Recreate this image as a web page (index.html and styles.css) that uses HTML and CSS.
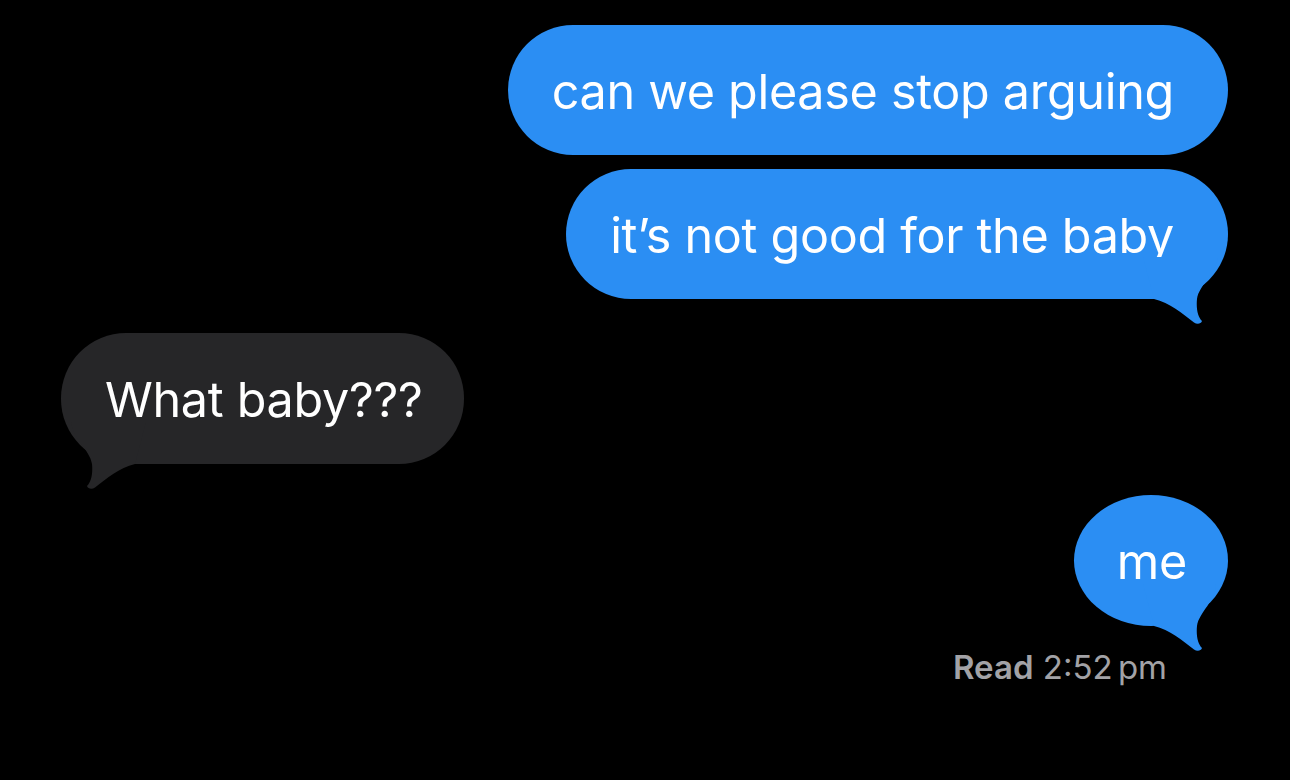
FILE: index.html
```html
<!DOCTYPE html>
<html>
<head>
<meta charset="utf-8">
<link rel="stylesheet" href="styles.css">
</head>
<body>
<div class="thread">
  <div class="msg sent pill first">can we please stop arguing</div>
  <div class="msg sent pill second">it’s not good for the baby
    <svg class="tail tail-right" viewBox="-90 -45 100 70" width="100" height="70"><path d="M -85 -42 L -10 -42 C -12 -25 -29 -14 -31 0 C -32 10 -30 18 -26 22 C -27 25 -31 25.5 -34 23.5 C -46 14 -58 4 -74 0 Z"/></svg>
  </div>
  <div class="msg recv pill">What baby???
    <svg class="tail tail-left" viewBox="-90 -45 100 70" width="100" height="70"><path d="M -85 -42 L -10 -42 C -12 -25 -29 -14 -31 0 C -32 10 -30 18 -26 22 C -27 25 -31 25.5 -34 23.5 C -46 14 -58 4 -74 0 Z"/></svg>
  </div>
  <div class="msg sent oval">me
    <svg class="tail tail-right" viewBox="-90 -45 100 70" width="100" height="70"><path d="M -85 -42 L -12 -42 C -12 -25 -29 -14 -31 0 C -32 10 -30 18 -26 22 C -27 25 -31 25.5 -34 23.5 C -46 14 -58 4 -74 0 Z"/></svg>
  </div>
  <div class="receipt"><b>Read</b> 2:52<span class="thin"> </span>pm</div>
</div>
</body>
</html>
```

FILE: styles.css
```css
html, body {
  margin: 0;
  padding: 0;
  background: #000;
  width: 1290px;
  height: 780px;
  overflow: hidden;
}

.thread {
  display: flex;
  flex-direction: column;
  padding: 25px 62px 0 61px;
  font-family: "Inter", "Liberation Sans", sans-serif;
}

.msg {
  position: relative;
  color: #fff;
  font-size: 48.5px;
  line-height: 60px;
  height: 130px;
  box-sizing: border-box;
  padding-top: 37px;
  white-space: nowrap;
  letter-spacing: -0.3px;
}

.pill {
  border-radius: 65px;
}

.sent {
  align-self: flex-end;
  background: #2b8ef3;
  padding-left: 44px;
  padding-right: 54px;
}

.recv {
  align-self: flex-start;
  background: #262628;
  padding-left: 44px;
  padding-right: 42px;
  margin-top: 34px;
  height: 131px;
}

.second {
  margin-top: 14px;
}

.oval {
  margin-top: 31px;
  border-radius: 50%;
  height: 131px;
  padding-left: 43px;
  padding-right: 41px;
}

.tail {
  position: absolute;
  bottom: -25px;
}

.tail-right {
  right: -10px;
  fill: #2b8ef3;
}

.tail-left {
  left: -10px;
  transform: scaleX(-1);
  fill: #262628;
}

.receipt {
  align-self: flex-end;
  margin-top: 21px;
  margin-right: 61px;
  color: #a2a2a6;
  font-size: 33px;
  line-height: 40px;
  font-family: "Inter", "Liberation Sans", sans-serif;
}

.receipt b {
  font-weight: 600;
}

.thin {
  letter-spacing: -4px;
}
```
